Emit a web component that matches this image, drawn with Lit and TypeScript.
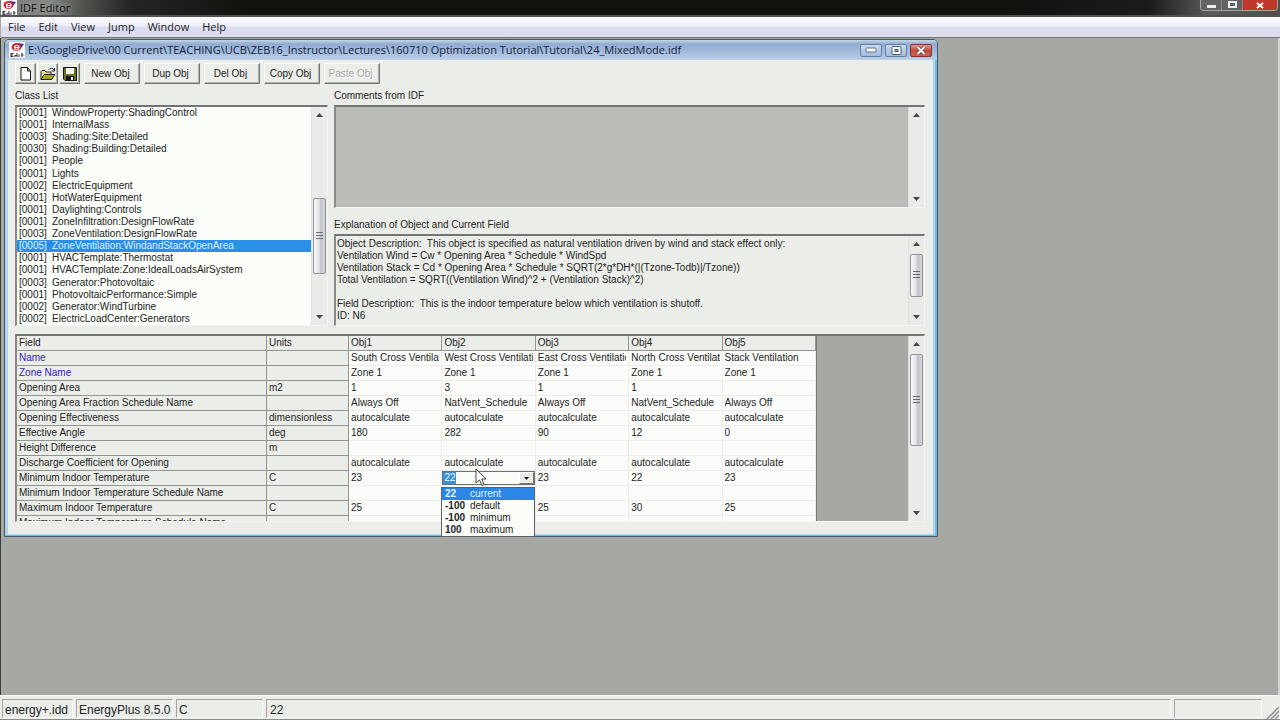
import { LitElement, html, css, svg } from "lit";
import { customElement, property } from "lit/decorators.js";
import { classMap } from "lit/directives/class-map.js";

const CLASSES: [string, string][] = [
  ["0001", "WindowProperty:ShadingControl"],
  ["0001", "InternalMass"],
  ["0003", "Shading:Site:Detailed"],
  ["0030", "Shading:Building:Detailed"],
  ["0001", "People"],
  ["0001", "Lights"],
  ["0002", "ElectricEquipment"],
  ["0001", "HotWaterEquipment"],
  ["0001", "Daylighting:Controls"],
  ["0001", "ZoneInfiltration:DesignFlowRate"],
  ["0003", "ZoneVentilation:DesignFlowRate"],
  ["0005", "ZoneVentilation:WindandStackOpenArea"],
  ["0001", "HVACTemplate:Thermostat"],
  ["0001", "HVACTemplate:Zone:IdealLoadsAirSystem"],
  ["0003", "Generator:Photovoltaic"],
  ["0001", "PhotovoltaicPerformance:Simple"],
  ["0002", "Generator:WindTurbine"],
  ["0002", "ElectricLoadCenter:Generators"],
];

interface Row { field: string; units: string; values: string[]; required?: boolean; editing?: number }

const auto = Array(5).fill("autocalculate");
const blank = Array(5).fill("");
const ROWS: Row[] = [
  { field: "Name", units: "", required: true, values: ["South Cross Ventilation", "West Cross Ventilation", "East Cross Ventilation", "North Cross Ventilation", "Stack Ventilation"] },
  { field: "Zone Name", units: "", required: true, values: Array(5).fill("Zone 1") },
  { field: "Opening Area", units: "m2", values: ["1", "3", "1", "1", ""] },
  { field: "Opening Area Fraction Schedule Name", units: "", values: ["Always Off", "NatVent_Schedule", "Always Off", "NatVent_Schedule", "Always Off"] },
  { field: "Opening Effectiveness", units: "dimensionless", values: auto },
  { field: "Effective Angle", units: "deg", values: ["180", "282", "90", "12", "0"] },
  { field: "Height Difference", units: "m", values: blank },
  { field: "Discharge Coefficient for Opening", units: "", values: auto },
  { field: "Minimum Indoor Temperature", units: "C", values: ["23", "22", "23", "22", "23"], editing: 1 },
  { field: "Minimum Indoor Temperature Schedule Name", units: "", values: blank },
  { field: "Maximum Indoor Temperature", units: "C", values: ["25", "", "25", "30", "25"] },
  { field: "Maximum Indoor Temperature Schedule Name", units: "", values: blank },
];

const EXPLANATION = `Object Description:  This object is specified as natural ventilation driven by wind and stack effect only:
Ventilation Wind = Cw * Opening Area * Schedule * WindSpd
Ventilation Stack = Cd * Opening Area * Schedule * SQRT(2*g*DH*(|(Tzone-Todb)|/Tzone))
Total Ventilation = SQRT((Ventilation Wind)^2 + (Ventilation Stack)^2)

Field Description:  This is the indoor temperature below which ventilation is shutoff.
ID: N6`;

const appIcon = html`<svg width="16" height="16" viewBox="0 0 16 16" aria-hidden="true">
  <rect width="16" height="16" fill="#f8f6f6" />
  <path d="M8 1l7 1-3 4z" fill="#27349c" />
  <ellipse cx="7.5" cy="5" rx="4.8" ry="4" fill="#cf1d26" />
  <path d="M5 5.5h5c0-3-4.500-3-4.500 0s3 2.500 4.500 1" fill="none" stroke="#fff" stroke-width="1.200" />
  <path d="M2 11v4M2 11.500h2.500M2 13h2M2 14.500h2.500M8 11v4M6 13.500h2M6 13v2M10 12.500v2.500M13 11v4M12 13h2.500" fill="none" stroke="#3b3436" stroke-width="1" />
</svg>`;

@customElement("scroll-bar")
export class ScrollBar extends LitElement {
  @property({ type: Number }) start = 0;
  @property({ type: Number }) size = 0;

  static styles = css`
    :host { display: flex; flex-direction: column; width: 16px; flex: none; background: #e9ebe8; border-left: 1px solid #dfe1de; box-sizing: border-box; }
    .arrow { display: grid; place-items: center; height: 16px; padding: 0; border: 0; background: none; flex: none; }
    .track { flex: 1; display: flex; flex-direction: column; padding: 0 1px; }
    .thumb { box-sizing: border-box; display: grid; place-items: center; border: 1px solid #92959a; border-radius: 2px; background: linear-gradient(90deg, #f7f8f9, #e2e4e7 45%, #c0c4ca 60%, #d2d5da); }
  `;

  render() {
    return html`
      <button class="arrow" aria-label="Scroll up"><svg width="7" height="4"><path d="M0 4L3.500 0 7 4z" fill="#454745" /></svg></button>
      <div class="track">
        ${this.size
          ? html`<div style="flex: ${this.start}"></div>
              <div class="thumb" style="flex: ${this.size}"><svg width="7" height="8"><path d="M0 .5h7M0 3.500h7M0 6.500h7" stroke="#686b70" /></svg></div>
              <div style="flex: ${100 - this.start - this.size}"></div>`
          : ""}
      </div>
      <button class="arrow" aria-label="Scroll down"><svg width="7" height="4"><path d="M0 0L3.500 4 7 0z" fill="#454745" /></svg></button>
    `;
  }
}

@customElement("app-root")
export class AppRoot extends LitElement {
  static styles = css`
    :host { display: flex; flex-direction: column; height: 100vh; overflow: hidden; font: 10px/14px "Liberation Sans", Arial, sans-serif; color: #222423; background: #a6a8a3; }
    button, input, textarea { font: inherit; color: inherit; }
    svg { display: block; }

    .titlebar { position: relative; display: flex; align-items: center; height: 17px; flex: none; padding-left: 1px; gap: 3px; box-sizing: border-box; overflow: hidden;
      background: linear-gradient(90deg, #777975 0, #858783 50px, #555652 80px, #252623 130px, #11120e 250px, #11120e 1000px, #1b1c1a 1150px, #5b5d5b 1210px, #4c4e4c); border-bottom: 2px solid #50534f; }
    .app-name, .menubar, .path { font-family: "Open Sans", "Segoe UI", sans-serif; }
    .app-name { margin: 0; font-size: 11px; font-weight: 400; color: #0b0c0b; text-shadow: 0 0 5px #b4b6b2; flex: 1; }
    .controls { display: flex; align-self: flex-start; margin-right: 2px; border: 1px solid #a5a7a6; border-top: 0; border-radius: 0 0 4px 4px; overflow: hidden; }
    .control { width: 21px; height: 10px; padding: 0; border: 0; border-right: 1px solid #8a8c8b; display: grid; place-items: center; background: #626463; }
    .control.close { width: 34px; border: 0; background: #c0382a; }

    .menubar { display: flex; gap: 11px; align-items: center; height: 20px; flex: none; padding-left: 6px; background: linear-gradient(#fcfcfe, #eeeff9 45%, #d9dbee 50%, #dddff0); border-bottom: 1px solid #70736f; margin-left: 1px; }
    .menu { border: 0; background: none; padding: 0 1px; font-size: 11px; }

    .desktop { flex: 1; min-height: 0; padding: 1px 0 0 3px; border-left: 1px solid #3c3b3b; border-right: 2px solid #d2d4d3; }
    .window { position: relative; box-sizing: border-box; width: 934px; border: 1px solid #415a6b; border-radius: 5px 5px 0 0; background: #b2d3eb; padding: 0 4px 2px 3px; box-shadow: inset -2px -1px #75bedb; }
    .window-title { display: flex; align-items: center; gap: 3px; height: 20px; margin: 0 -4px 0 -3px; padding: 0 5px 0 4px; border-radius: 4px 4px 0 0; background: linear-gradient(#c5d7ec 0, #91acd0 20%, #a3bcdd 60%, #bbd0e9); }
    .path { flex: 1; margin: 0; font-size: 11px; font-weight: 400; color: #15233b; }
    .window-controls { display: flex; gap: 3px; }
    .window-control { width: 22px; height: 13px; padding: 0; display: grid; place-items: center; border: 1px solid #6581a5; border-radius: 2px; background: linear-gradient(#c8daee, #a0bbdb); }
    .window-control.close { border-color: #7d373a; background: linear-gradient(#dd9a8d, #c44f3e 50%, #c9614c); }

    .content { background: #ebede9; padding: 3px 8px 12px 7px; }
    .toolbar { display: flex; gap: 4px; margin-bottom: 5px; }
    .icons { display: flex; gap: 1px; }
    .tool { box-sizing: border-box; width: 56px; height: 21px; padding: 0 3px 0 0; border: 1px solid; border-color: #fafbf9 #727471 #727471 #fafbf9; box-shadow: inset -1px -1px #b3b5b1; background: #ebede9; white-space: nowrap; }
    .tool.icon { width: 21px; padding: 0; display: grid; place-items: center; }
    .tool:disabled { color: #a4a6a3; text-shadow: 1px 1px #fff; }

    .panes { display: grid; grid-template-columns: 313px 1fr; column-gap: 6px; margin-bottom: 8px; }
    .pane { display: flex; flex-direction: column; min-width: 0; }
    .right { display: flex; flex-direction: column; gap: 10px; min-width: 0; }
    .grow { flex: 1; }
    .caption { height: 16px; line-height: 14px; }
    .well { box-sizing: border-box; display: flex; border: 1px solid #f5f6f4; border-top: 2px solid #737572; border-left: 2px solid #888a87; overflow: hidden; }
    .list { height: 221px; background: #fbfdf9; }
    .items { flex: 1; margin: 0; padding: 0; list-style: none; display: grid; grid-auto-rows: 1fr; }
    .item { display: grid; grid-template-columns: 33px 1fr; align-items: center; padding-left: 2px; line-height: 12px; white-space: nowrap; }
    .item.selected { background: #2b8fe8; color: #dff0fb; }
    .memo { flex: 1; min-width: 0; border: 0; outline: 0; resize: none; padding: 2px 1px; margin: 0; overflow: hidden; line-height: 12px; background: none; }
    .comments { height: 103px; background: #babcb7; }
    .explanation { flex: 1; background: #ebede9; }

    .grid { position: relative; }
    .sheet { height: 188px; background: #a6a8a3; justify-content: space-between; }
    table { table-layout: fixed; width: 800px; border-collapse: separate; border-spacing: 0; align-self: flex-start; border-right: 1px solid #797b78; background: #fbfcf9; }
    .field-col { width: 250px; }
    .units-col { width: 82px; }
    th, td { box-sizing: border-box; height: 15px; padding: 0 2px; text-align: left; font-weight: 400; line-height: 14px; white-space: nowrap; border: 0 solid #eceeea; border-width: 0 1px 1px 0; }
    thead th, .fixed { background: #ebede9; border-color: #929491; }
    .value { display: block; overflow: hidden; }
    .required { color: #3622b8; }
    .editor { padding: 0; }
    .combo { display: flex; box-sizing: border-box; height: 14px; border: 1px solid #70726f; background: #fbfdf9; }
    .combo-input { flex: 1; min-width: 0; border: 0; outline: 0; padding: 0 1px; height: 12px; color: #eef7fd; background: linear-gradient(#398fdd, #398fdd) no-repeat 0 0 / 13px 12px; }
    .combo-button { width: 15px; padding: 0; display: grid; place-items: center; border: 1px solid; border-color: #fff #747673 #747673 #fff; background: #ebede9; }
    .options { position: absolute; top: 153px; left: 426px; width: 94px; height: 50px; box-sizing: border-box; margin: 0; padding: 0; list-style: none; border: 1px solid #5f6265; background: #fbfdf9; display: grid; grid-auto-rows: 1fr; z-index: 1; }
    .option { display: grid; grid-template-columns: 25px 1fr; align-items: center; padding-left: 3px; line-height: 12px; }
    .option.selected { background: #2b86e6; color: #e4f2fc; }
    .pointer { position: absolute; top: 134px; left: 460px; z-index: 2; }

    .status { display: flex; gap: 3px; height: 25px; flex: none; box-sizing: border-box; padding: 3px 18px 1px 2px; border-top: 1px solid #fafbf9; border-bottom: 1px solid #8a8c89; background: #ebede9; position: relative; font-size: 12px; }
    .cell { box-sizing: border-box; border: 1px solid; border-color: #a3a5a2 #f8f9f7 #f8f9f7 #a3a5a2; padding: 0 2px; line-height: 20px; white-space: nowrap; overflow: hidden; }
    .c1 { width: 71px; } .c2 { width: 97px; } .c3 { width: 87px; } .c4 { flex: 1; padding: 0 3px; } .c5 { width: 88px; }
    .grip { position: absolute; right: 1px; bottom: 0; }
  `;

  private closeGlyph = svg`<path d="M1 1l6 5M7 1L1 6" stroke="#fff" stroke-width="2" />`;

  render() {
    return html`
      <header class="titlebar">
        ${appIcon}
        <h1 class="app-name">IDF Editor</h1>
        <div class="controls">
          <button class="control" aria-label="Minimize"><svg width="9" height="6"><rect y="3" width="9" height="3" fill="#eee" /></svg></button>
          <button class="control" aria-label="Maximize"><svg width="9" height="8"><rect x="1" y="1" width="7" height="5" fill="none" stroke="#eee" stroke-width="2" /></svg></button>
          <button class="control close" aria-label="Close"><svg width="8" height="7">${this.closeGlyph}</svg></button>
        </div>
      </header>
      <nav class="menubar">
        ${["File", "Edit", "View", "Jump", "Window", "Help"].map((m) => html`<button class="menu">${m}</button>`)}
      </nav>
      <main class="desktop">
        <section class="window">
          <div class="window-title">
            ${appIcon}
            <h2 class="path">E:\\GoogleDrive\\00 Current\\TEACHING\\UCB\\ZEB16_Instructor\\Lectures\\160710 Optimization Tutorial\\Tutorial\\24_MixedMode.idf</h2>
            <div class="window-controls">
              <button class="window-control" aria-label="Minimize"><svg width="12" height="6"><rect x="1" y="1" width="10" height="4" rx="1" fill="#fff" stroke="#58708e" /></svg></button>
              <button class="window-control" aria-label="Maximize"><svg width="11" height="9"><rect x="1" y=".5" width="9" height="8" rx="1" fill="#fff" stroke="#465a74" /><rect x="4" y="3.500" width="3" height="2" fill="#7898bd" stroke="#465a74" /></svg></button>
              <button class="window-control close" aria-label="Close"><svg width="10" height="9"><path d="M1.500 1l7 7M8.500 1l-7 7" stroke="#6b3532" stroke-width="3.500" /><path d="M1.500 1l7 7M8.500 1l-7 7" stroke="#fff" stroke-width="2" /></svg></button>
            </div>
          </div>
          <div class="content">${this.toolbar()}${this.panes()}${this.grid()}</div>
        </section>
      </main>
      <footer class="status">
        <div class="cell c1">energy+.idd</div>
        <div class="cell c2">EnergyPlus 8.5.0</div>
        <div class="cell c3">C</div>
        <div class="cell c4">22</div>
        <div class="cell c5"></div>
        <svg class="grip" width="13" height="13"><path d="M1 13L13 1M5 13l8-8M9 13l4-4" stroke="#8d8f8c" stroke-width="1.500" /></svg>
      </footer>
    `;
  }

  private toolbar() {
    return html`<div class="toolbar">
      <div class="icons">
        <button class="tool icon" aria-label="New"><svg width="12" height="14"><path d="M1 .5h6.500L10.500 4v9H1zM7.500.5V4h3" fill="#fff" stroke="#111" /></svg></button>
        <button class="tool icon" aria-label="Open"><svg width="16" height="14"><path d="M1 12.500V4.500l1-1h3l1 1.500h5v2.500" fill="#e6e58a" stroke="#222" /><path d="M1 12.500L4 7.500h11l-3.500 5z" fill="#a5a632" stroke="#222" /><path d="M9 2.500c1.500-2 4-1.500 5 .5M14.500 1v3h-3" fill="none" stroke="#222" /></svg></button>
        <button class="tool icon" aria-label="Save"><svg width="14" height="14"><path d="M.5.5h13v13H2L.5 12z" fill="#6e7022" stroke="#111" /><rect x="3" y="1" width="8" height="6" fill="#f2f3ef" /><rect x="3" y="9" width="8" height="4" fill="#111" /><rect x="8" y="10" width="2" height="3" fill="#eee" /></svg></button>
      </div>
      <button class="tool">New Obj</button>
      <button class="tool">Dup Obj</button>
      <button class="tool">Del Obj</button>
      <button class="tool">Copy Obj</button>
      <button class="tool" disabled>Paste Obj</button>
    </div>`;
  }

  private panes() {
    return html`<div class="panes">
      <div class="pane">
        <span class="caption" id="class-caption">Class List</span>
        <div class="well list">
          <ul class="items" role="listbox" aria-labelledby="class-caption">
            ${CLASSES.map(([count, name], i) => html`<li role="option" aria-selected=${i === 11} class=${classMap({ item: true, selected: i === 11 })}><span>[${count}]</span><span>${name}</span></li>`)}
          </ul>
          <scroll-bar .start=${41} .size=${40}></scroll-bar>
        </div>
      </div>
      <div class="right">
        <div class="pane">
          <label class="caption" for="comments">Comments from IDF</label>
          <div class="well comments"><textarea class="memo" id="comments" readonly></textarea><scroll-bar></scroll-bar></div>
        </div>
        <div class="pane grow">
          <label class="caption" for="explanation">Explanation of Object and Current Field</label>
          <div class="well explanation"><textarea class="memo" id="explanation" readonly .value=${EXPLANATION}></textarea><scroll-bar .start=${3} .size=${75}></scroll-bar></div>
        </div>
      </div>
    </div>`;
  }

  private grid() {
    return html`<div class="grid">
      <div class="well sheet">
        <table>
          <colgroup><col class="field-col" /><col class="units-col" /><col span="5" /></colgroup>
          <thead><tr>${["Field", "Units", "Obj1", "Obj2", "Obj3", "Obj4", "Obj5"].map((h) => html`<th scope="col">${h}</th>`)}</tr></thead>
          <tbody>
            ${ROWS.map((r) => html`<tr>
              <th scope="row" class=${classMap({ fixed: true, required: !!r.required })}>${r.field}</th>
              <td class="fixed">${r.units}</td>
              ${r.values.map((v, i) => r.editing === i
                ? html`<td class="editor"><div class="combo"><input class="combo-input" aria-label=${r.field} .value=${v} /><button class="combo-button" aria-label="Show values"><svg width="5" height="3"><path d="M0 0h5L2.500 3z" fill="#111" /></svg></button></div></td>`
                : html`<td><span class="value">${v}</span></td>`)}
            </tr>`)}
          </tbody>
        </table>
        <scroll-bar .start=${1} .size=${60}></scroll-bar>
      </div>
      <ul class="options" role="listbox" aria-label="Suggested values">
        ${[["22", "current"], ["-100", "default"], ["-100", "minimum"], ["100", "maximum"]].map(([v, label], i) => html`<li role="option" aria-selected=${i === 0} class=${classMap({ option: true, selected: i === 0 })}><b>${v}</b><span>${label}</span></li>`)}
      </ul>
      <svg class="pointer" width="12" height="19" aria-hidden="true"><path d="M1 1v14l3.500-3 2.500 5.500 2-1L6.800 11H11z" fill="#fff" stroke="#444" /></svg>
    </div>`;
  }
}
